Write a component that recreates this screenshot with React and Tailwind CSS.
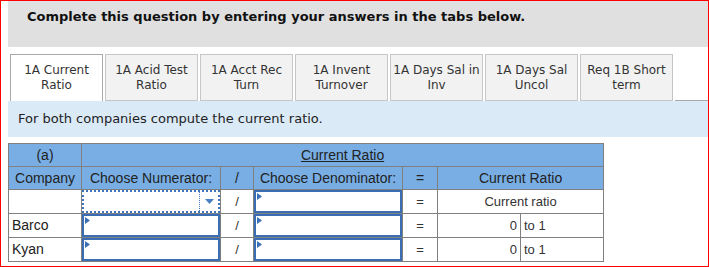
import React from "react";

const tabs = [
  ["1A Current", "Ratio"],
  ["1A Acid Test", "Ratio"],
  ["1A Acct Rec", "Turn"],
  ["1A Invent", "Turnover"],
  ["1A Days Sal in", "Inv"],
  ["1A Days Sal", "Uncol"],
  ["Req 1B Short", "term"],
];

function Flag() {
  return (
    <svg className="absolute left-[1px] top-[1px]" width="5" height="7" viewBox="0 0 5 7">
      <polygon points="0,0 5,3.5 0,7" fill="#3b6fb6" />
    </svg>
  );
}

function Field() {
  return (
    <div className="relative h-[23px] w-full border-2 border-[#3b6db3] bg-white">
      <Flag />
    </div>
  );
}

function Dropdown() {
  return (
    <div className="flex h-[23px] w-full border-2 border-dotted border-[#3f74bb] bg-white">
      <div className="flex-1" />
      <div className="flex w-[19px] items-center justify-center border-l border-dotted border-[#3f74bb]">
        <svg width="9" height="5" viewBox="0 0 9 5">
          <polygon points="0,0 9,0 4.5,5" fill="#4a80c4" />
        </svg>
      </div>
    </div>
  );
}

export default function App() {
  const cell = "border border-[#808080] h-[23px] p-0";
  const head = cell + " text-center text-[14px] text-[#222]";
  return (
    <div className="w-[709px] h-[267px] border border-[#ff0000] bg-white overflow-hidden">
      <div className="ml-[7px] h-[46px] bg-[#e0e0e0] pl-[19px] pt-[7px]">
        <p className="font-['DejaVu_Sans',sans-serif] text-[13px] font-bold text-[#111] leading-[17px]">
          Complete this question by entering your answers in the tabs below.
        </p>
      </div>

      <div className="mt-[7px] ml-[7px] flex items-end">
        <div className="w-[2px] h-[47px]" />
        {tabs.map((t, i) => (
          <div
            key={i}
            className={
              "mr-[2px] flex h-[47px] w-[93px] flex-col items-center justify-center border font-['DejaVu_Sans',sans-serif] text-[12px] leading-[15px] text-[#333] " +
              (i === 0
                ? "border-[#a8a8a8] border-b-0 bg-white"
                : "border-[#c6c6c6] bg-[#f2f2f2]")
            }
          >
            <span>{t[0]}</span>
            <span>{t[1]}</span>
          </div>
        ))}
        <div className="flex-1 h-[1px] bg-[#a8a8a8]" />
      </div>

      <div className="ml-[7px] h-[36px] bg-[#dbeaf7] pl-[10px] flex items-center font-['DejaVu_Sans',sans-serif] text-[13px] text-[#222]">
        For both companies compute the current ratio.
      </div>

      <table className="mt-[6px] ml-[7px] w-[596px] table-fixed border-collapse font-['Liberation_Sans',Arial,sans-serif] text-[13px] text-[#333]">
        <colgroup>
          <col className="w-[73px]" />
          <col className="w-[139px]" />
          <col className="w-[33px]" />
          <col className="w-[149px]" />
          <col className="w-[35px]" />
          <col className="w-[83px]" />
          <col className="w-[83px]" />
        </colgroup>
        <tbody>
          <tr className="bg-[#78aee4]">
            <td className={head}>(a)</td>
            <td className={head + " underline"} colSpan={6}>
              Current Ratio
            </td>
          </tr>
          <tr className="bg-[#78aee4]">
            <td className={head}>Company</td>
            <td className={head}>Choose Numerator:</td>
            <td className={head}>/</td>
            <td className={head}>Choose Denominator:</td>
            <td className={head}>=</td>
            <td className={head} colSpan={2}>
              Current Ratio
            </td>
          </tr>
          <tr>
            <td className={cell}></td>
            <td className={cell + " align-top"}>
              <Dropdown />
            </td>
            <td className={cell + " text-center"}>/</td>
            <td className={cell + " align-top"}>
              <Field />
            </td>
            <td className={cell + " text-center"}>=</td>
            <td className={cell + " text-center"} colSpan={2}>
              Current ratio
            </td>
          </tr>
          {["Barco", "Kyan"].map((n) => (
            <tr key={n}>
              <td className={cell + " pl-[3px] text-[14px] text-[#222]"}>{n}</td>
              <td className={cell + " align-top"}>
                <Field />
              </td>
              <td className={cell + " text-center"}>/</td>
              <td className={cell + " align-top"}>
                <Field />
              </td>
              <td className={cell + " text-center"}>=</td>
              <td className={cell + " text-right pr-[3px]"}>0</td>
              <td className={cell + " pl-[3px]"}>to 1</td>
            </tr>
          ))}
        </tbody>
      </table>
    </div>
  );
}
